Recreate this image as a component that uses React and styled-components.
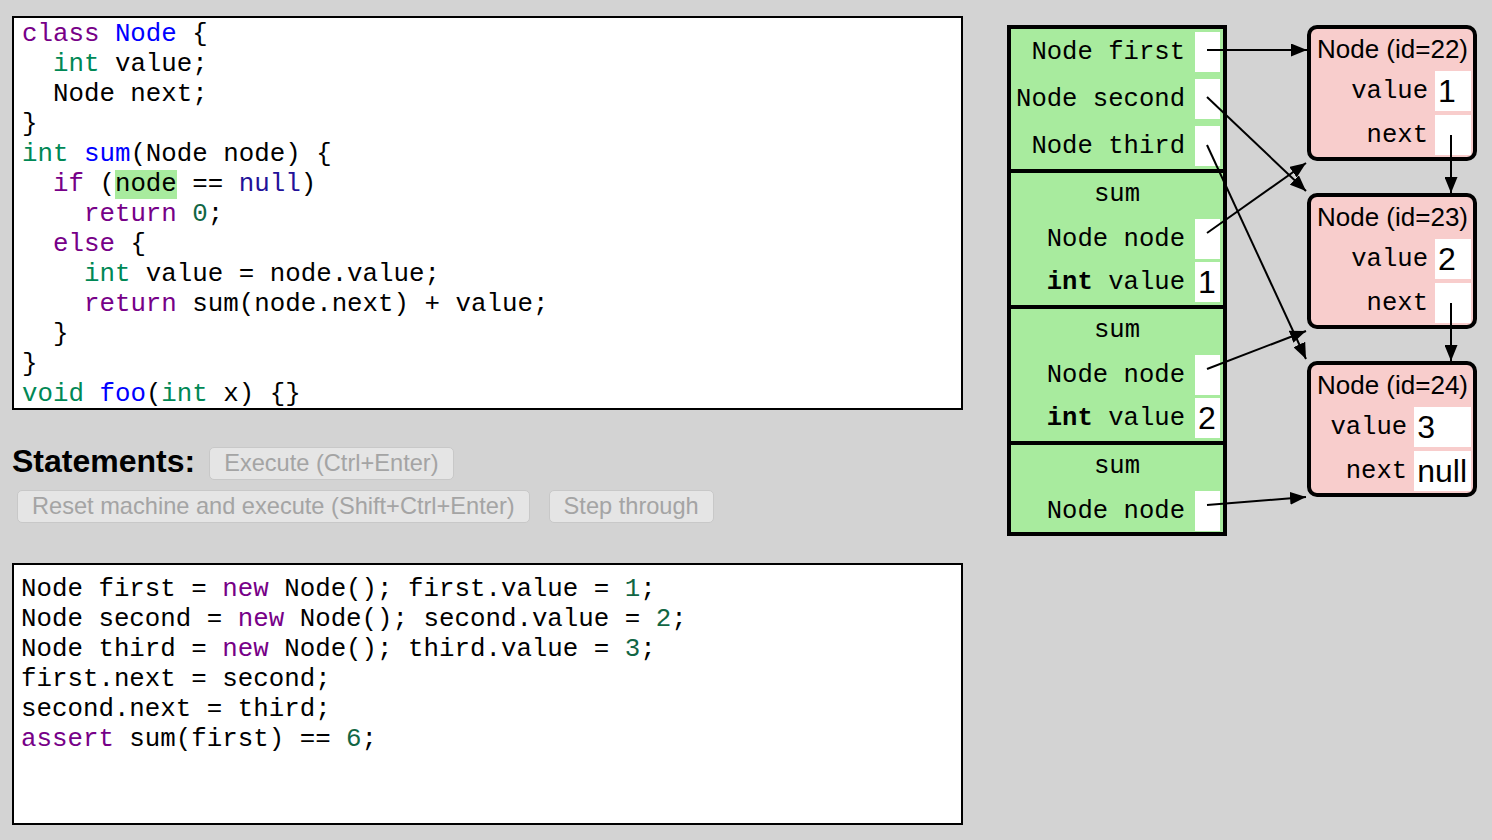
import React from 'react'
import styled, { createGlobalStyle } from 'styled-components'

const GlobalStyle = createGlobalStyle`
  html, body {
    margin: 0;
    padding: 0;
    background: #d3d3d3;
  }
  body {
    font-family: "Liberation Sans", Arial, sans-serif;
  }
`

const mono = `"Liberation Mono", "Courier New", monospace`

const Page = styled.div`
  position: relative;
  display: flex;
  align-items: flex-start;
  width: 1492px;
  height: 840px;
  box-sizing: border-box;
  padding: 16px 0 0 12px;
`

const LeftColumn = styled.div`
  width: 951px;
  display: flex;
  flex-direction: column;
`

const Editor = styled.div`
  box-sizing: border-box;
  height: ${p => p.$height}px;
  margin-top: ${p => p.$top || 0}px;
  border: 2px solid #000;
  background: #fff;
  padding: ${p => p.$pad};
  font-family: ${mono};
  font-size: 25.8px;
  line-height: 30px;
  white-space: pre;
  color: #000;
  overflow: hidden;
`

const Kw = styled.span` color: #708; `
const Type = styled.span` color: #085; `
const Def = styled.span` color: #00f; `
const Atom = styled.span` color: #219; `
const Num = styled.span` color: #164; `
const Mark = styled.span` background: #a8eb9e; `

const Controls = styled.div`
  margin-top: 37px;
  display: flex;
  flex-direction: column;
  gap: 10px;
`

const ControlRow = styled.div`
  display: flex;
  align-items: center;
  height: 33px;
  gap: ${p => p.$gap || 0}px;
  padding-left: ${p => p.$indent || 0}px;
`

const Heading = styled.span`
  font-weight: bold;
  font-size: 32px;
  line-height: 33px;
  margin: -4px 14px 0 0;
  color: #000;
`

const Button = styled.button`
  height: 33px;
  padding: 0 14px;
  font-family: "Liberation Sans", Arial, sans-serif;
  font-size: 23.6px;
  color: #a4a4a4;
  background: #e5e5e5;
  border: 1px solid #c8c8c8;
  border-radius: 5px;
  white-space: nowrap;
`

const Stack = styled.div`
  margin: 9px 0 0 44px;
  width: 220px;
  box-sizing: border-box;
  border: 4px solid #000;
  background: #a8eb9e;
  display: flex;
  flex-direction: column;
`

const Frame = styled.div`
  display: grid;
  grid-template-columns: 1fr 25px;
  column-gap: 10px;
  row-gap: ${p => p.$gap}px;
  padding: 3px;
  & + & {
    border-top: 4px solid #000;
  }
  &:last-child {
    padding-bottom: 1px;
  }
`

const FrameTitle = styled.div`
  grid-column: 1 / -1;
  height: 40px;
  line-height: 38px;
  text-align: center;
  font-family: ${mono};
  font-size: 25.6px;
`

const VarLabel = styled.div`
  align-self: center;
  text-align: right;
  white-space: nowrap;
  font-family: ${mono};
  font-size: 25.6px;
  & b { font-weight: bold; }
`

const ValueBox = styled.div`
  height: 40px;
  box-sizing: border-box;
  min-width: ${p => p.$min || 0}px;
  padding: 0 4px 0 3px;
  background: #fff;
  display: flex;
  align-items: center;
  font-family: "Liberation Sans", Arial, sans-serif;
  font-size: 32px;
`

const Heap = styled.div`
  margin: 9px 0 0 80px;
  display: flex;
  flex-direction: column;
  gap: 32px;
`

const HeapNode = styled.div`
  width: 170px;
  height: 136px;
  box-sizing: border-box;
  border: 4px solid #000;
  border-radius: 10px;
  background: #f8cdcc;
  display: grid;
  grid-template-columns: 1fr auto;
  grid-template-rows: 35px 40px 40px;
  column-gap: 7px;
  row-gap: 4px;
  padding: 3px 2px 3px 3px;
`

const NodeTitle = styled.div`
  grid-column: 1 / -1;
  line-height: 35px;
  text-align: center;
  white-space: nowrap;
  font-size: 26px;
`

const Arrows = styled.svg`
  position: absolute;
  left: 0;
  top: 0;
  pointer-events: none;
`

const arrows = [
  [1207, 50, 1307, 50],
  [1207, 97, 1306, 191],
  [1207, 145, 1306, 359],
  [1207, 233, 1306, 163],
  [1207, 369, 1306, 331],
  [1207, 505, 1306, 497],
  [1451, 135, 1451, 193],
  [1451, 303, 1451, 361],
]

const frames = [
  { gap: 7, vars: [['Node', 'first', ''], ['Node', 'second', ''], ['Node', 'third', '']] },
  { gap: 3, title: 'sum', vars: [['Node', 'node', ''], ['int', 'value', '1']] },
  { gap: 3, title: 'sum', vars: [['Node', 'node', ''], ['int', 'value', '2']] },
  { gap: 3, title: 'sum', vars: [['Node', 'node', '']] },
]

const nodes = [
  { id: 22, value: '1', next: '' },
  { id: 23, value: '2', next: '' },
  { id: 24, value: '3', next: 'null' },
]

const App = () => (
  <Page>
    <GlobalStyle />
    <LeftColumn>
      <Editor $height={394} $pad="2px 0 0 8px">
        <Kw>class</Kw> <Def>Node</Def> {'{'}{'\n'}
        {'  '}<Type>int</Type> value;{'\n'}
        {'  '}Node next;{'\n'}
        {'}'}{'\n'}
        <Type>int</Type> <Def>sum</Def>(Node node) {'{'}{'\n'}
        {'  '}<Kw>if</Kw> (<Mark>node</Mark> == <Atom>null</Atom>){'\n'}
        {'    '}<Kw>return</Kw> <Num>0</Num>;{'\n'}
        {'  '}<Kw>else</Kw> {'{'}{'\n'}
        {'    '}<Type>int</Type> value = node.value;{'\n'}
        {'    '}<Kw>return</Kw> sum(node.next) + value;{'\n'}
        {'  }'}{'\n'}
        {'}'}{'\n'}
        <Type>void</Type> <Def>foo</Def>(<Type>int</Type> x) {'{}'}
      </Editor>
      <Controls>
        <ControlRow>
          <Heading>Statements:</Heading>
          <Button disabled>Execute (Ctrl+Enter)</Button>
        </ControlRow>
        <ControlRow $gap={19} $indent={5}>
          <Button disabled>Reset machine and execute (Shift+Ctrl+Enter)</Button>
          <Button disabled>Step through</Button>
        </ControlRow>
      </Controls>
      <Editor $height={262} $top={40} $pad="10px 0 0 7px">
        Node first = <Kw>new</Kw> Node(); first.value = <Num>1</Num>;{'\n'}
        Node second = <Kw>new</Kw> Node(); second.value = <Num>2</Num>;{'\n'}
        Node third = <Kw>new</Kw> Node(); third.value = <Num>3</Num>;{'\n'}
        first.next = second;{'\n'}
        second.next = third;{'\n'}
        <Kw>assert</Kw> sum(first) == <Num>6</Num>;
      </Editor>
    </LeftColumn>

    <Stack>
      {frames.map((f, i) => (
        <Frame key={i} $gap={f.gap}>
          {f.title && <FrameTitle>{f.title}</FrameTitle>}
          {f.vars.map(([type, name, val]) => (
            <React.Fragment key={name}>
              <VarLabel>
                {type === 'int' ? <b>int</b> : type} {name}
              </VarLabel>
              <ValueBox>{val}</ValueBox>
            </React.Fragment>
          ))}
        </Frame>
      ))}
    </Stack>

    <Heap>
      {nodes.map(n => (
        <HeapNode key={n.id}>
          <NodeTitle>Node (id={n.id})</NodeTitle>
          <VarLabel>value</VarLabel>
          <ValueBox $min={36}>{n.value}</ValueBox>
          <VarLabel>next</VarLabel>
          <ValueBox $min={36}>{n.next}</ValueBox>
        </HeapNode>
      ))}
    </Heap>

    <Arrows width="1492" height="840" viewBox="0 0 1492 840">
      <defs>
        <marker id="head" markerUnits="userSpaceOnUse" markerWidth="16" markerHeight="13"
          refX="16" refY="6.5" orient="auto">
          <path d="M0,0 L16,6.5 L0,13 z" fill="#000" />
        </marker>
      </defs>
      {arrows.map(([x1, y1, x2, y2], i) => (
        <line key={i} x1={x1} y1={y1} x2={x2} y2={y2}
          stroke="#000" strokeWidth="2" markerEnd="url(#head)" />
      ))}
    </Arrows>
  </Page>
)

export default App
